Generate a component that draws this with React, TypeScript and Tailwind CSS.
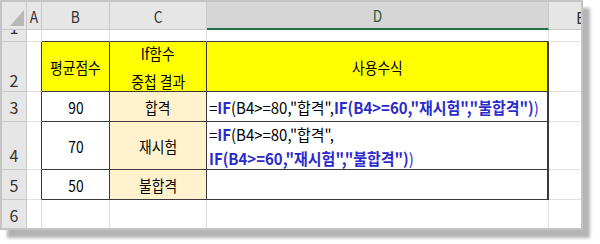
import React from "react";

const B = "text-[#2a2acc] font-bold";

function Sq({ children, left }: { children: React.ReactNode; left?: boolean }) {
  return (
    <span className={`inline-block whitespace-nowrap scale-x-[0.86] ${left ? "origin-left" : "origin-center"}`}>
      {children}
    </span>
  );
}

function Fx({ children }: { children: React.ReactNode }) {
  return <span className="inline-block whitespace-nowrap scale-x-[0.935] origin-left">{children}</span>;
}

function RH({ children, className = "" }: { children?: React.ReactNode; className?: string }) {
  return (
    <div className={`bg-[#e6e6e6] border-r border-b border-[#c9c9c9] flex justify-center items-end pb-[3px] text-[16px] leading-none text-[#333] overflow-hidden ${className}`}>
      {children}
    </div>
  );
}

function CH({ children, className = "" }: { children?: React.ReactNode; className?: string }) {
  return (
    <div className={`bg-[#e6e6e6] border-r border-b border-[#c9c9c9] flex justify-center items-center text-[16px] leading-none text-[#333] ${className}`}>
      <Sq>{children}</Sq>
    </div>
  );
}

export default function App() {
  return (
    <div className="w-[600px] h-[244px] bg-white font-['Noto_Sans_CJK_KR','Noto_Sans',sans-serif]">
      <div className="w-[583px] h-[230px] border-2 border-[#c4c4c4] shadow-[7px_8px_3px_#b4b4b4] bg-white">
        <div className="grid grid-cols-[25px_15px_68px_97px_342px_32px] grid-rows-[28px_12px_50px_30px_48px_30px_28px]">
          {/* header row */}
          <div className="bg-[#e6e6e6] border-r border-b border-[#c9c9c9] relative">
            <svg width="24" height="27" className="block">
              <polygon points="22,8 22,24 8,24" fill="#b8b8b8" />
            </svg>
          </div>
          <CH>A</CH>
          <CH>B</CH>
          <CH>C</CH>
          <div className="bg-[#d6d6d6] border-r border-[#c9c9c9] border-b-2 border-b-[#217346] flex justify-center items-center text-[16px] leading-none text-[#2e5e40]">
            <Sq>D</Sq>
          </div>
          <div className="bg-[#e6e6e6] border-b border-[#c9c9c9] overflow-hidden relative text-[16px] leading-none text-[#333]">
            <span className="absolute left-[27px] top-[7px]">E</span>
          </div>

          {/* row 1 */}
          <div className="bg-[#e6e6e6] border-r border-b border-[#c9c9c9] flex justify-center overflow-hidden text-[16px] leading-none text-[#333]">
            <span className="-mt-[11px]">1</span>
          </div>
          <div className="border-r border-b border-[#e1e1e1]" />
          <div className="border-r border-[#e1e1e1] border-b border-b-[#3a3a3a]" />
          <div className="border-r border-[#e1e1e1] border-b border-b-[#3a3a3a]" />
          <div className="border-r border-[#e1e1e1] border-b border-b-[#3a3a3a]" />
          <div className="border-b border-[#e1e1e1]" />

          {/* row 2 */}
          <RH>2</RH>
          <div className="border-b border-[#e1e1e1] border-r border-r-[#3a3a3a]" />
          <div className="bg-[#ffff00] border-r border-b border-[#3a3a3a] flex items-center justify-center text-[16px] text-black">
            <Sq>평균점수</Sq>
          </div>
          <div className="bg-[#ffff00] border-r border-b border-[#3a3a3a] flex flex-col items-center justify-center text-[16px] leading-[28px] text-black">
            <Sq>If함수</Sq>
            <Sq>중첩 결과</Sq>
          </div>
          <div className="bg-[#ffff00] border-r-2 border-b border-[#3a3a3a] flex items-center justify-center text-[16px] text-black">
            <Sq>사용수식</Sq>
          </div>
          <div className="border-b border-[#e1e1e1]" />

          {/* row 3 */}
          <RH className="pb-[6px]">3</RH>
          <div className="border-b border-[#e1e1e1] border-r border-r-[#3a3a3a]" />
          <div className="border-r border-b border-[#3a3a3a] flex items-center justify-center text-[16px] text-black">
            <Sq>90</Sq>
          </div>
          <div className="bg-[#fff2cc] border-r border-b border-[#3a3a3a] flex items-center justify-center text-[16px] text-black">
            <Sq>합격</Sq>
          </div>
          <div className="border-r-2 border-b border-[#3a3a3a] flex items-center pl-[2px] text-[16px] text-black overflow-hidden">
            <Fx>
              =<span className={B}>IF</span>(B4&gt;=80,"합격",<span className={B}>IF(B4&gt;=60,"재시험","불합격")</span><span className="text-[#2a2acc]">)</span>
            </Fx>
          </div>
          <div className="border-b border-[#e1e1e1]" />

          {/* row 4 */}
          <RH className="pb-[6px]">4</RH>
          <div className="border-b border-[#e1e1e1] border-r border-r-[#3a3a3a]" />
          <div className="border-r border-b border-[#3a3a3a] flex items-center justify-center text-[16px] text-black">
            <Sq>70</Sq>
          </div>
          <div className="bg-[#fff2cc] border-r border-b border-[#3a3a3a] flex items-center justify-center text-[16px] text-black">
            <Sq>재시험</Sq>
          </div>
          <div className="border-r-2 border-b border-[#3a3a3a] flex flex-col justify-center pl-[2px] text-[16px] leading-[24px] text-black overflow-hidden">
            <Fx>
              =<span className={B}>IF</span>(B4&gt;=80,"합격",
            </Fx>
            <Fx>
              <span className={B}>IF(B4&gt;=60,"재시험","불합격")</span><span className="text-[#2a2acc]">)</span>
            </Fx>
          </div>
          <div className="border-b border-[#e1e1e1]" />

          {/* row 5 */}
          <RH className="pb-[6px]">5</RH>
          <div className="border-b border-[#e1e1e1] border-r border-r-[#3a3a3a]" />
          <div className="border-r border-b border-[#3a3a3a] flex items-center justify-center text-[16px] text-black">
            <Sq>50</Sq>
          </div>
          <div className="bg-[#fff2cc] border-r border-b border-[#3a3a3a] flex items-center justify-center text-[16px] text-black">
            <Sq>불합격</Sq>
          </div>
          <div className="border-r-2 border-b border-[#3a3a3a]" />
          <div className="border-b border-[#e1e1e1]" />

          {/* row 6 */}
          <RH className="pb-[5px] border-b-0">6</RH>
          <div className="border-r border-[#e1e1e1]" />
          <div className="border-r border-[#e1e1e1]" />
          <div className="border-r border-[#e1e1e1]" />
          <div className="border-r border-[#e1e1e1]" />
          <div />
        </div>
      </div>
    </div>
  );
}
